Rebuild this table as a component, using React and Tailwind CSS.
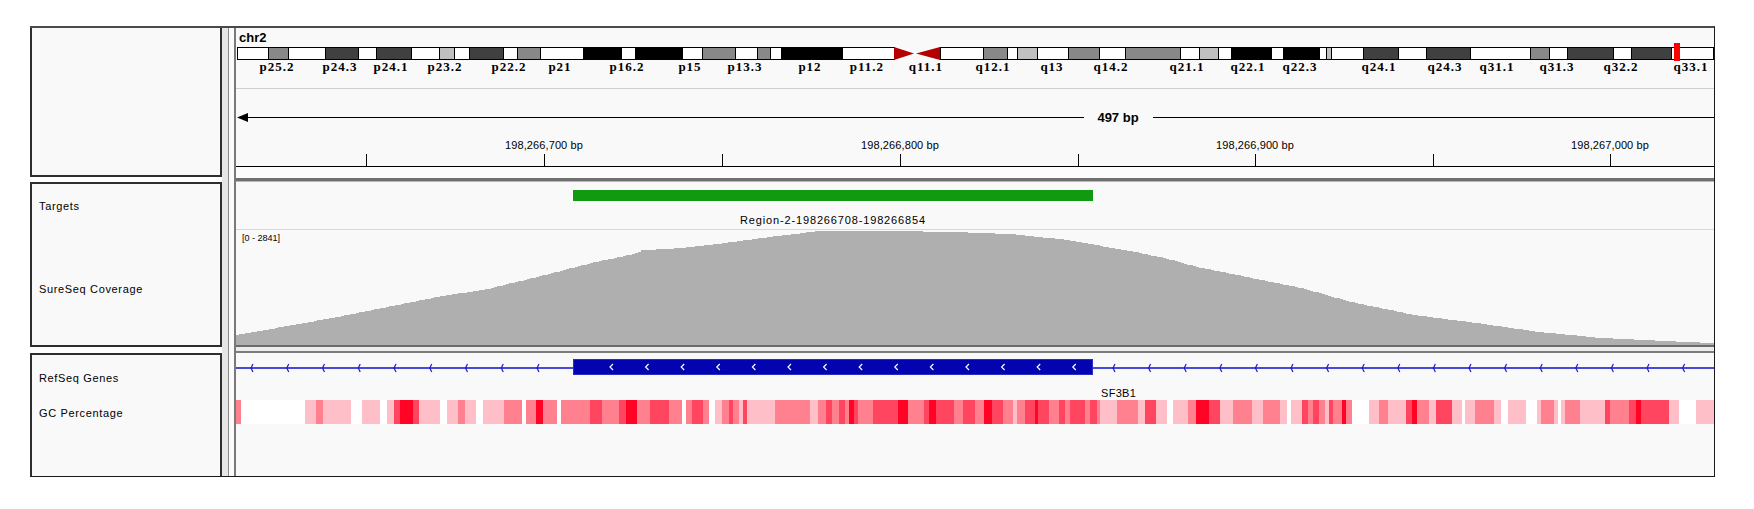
import React from "react";

// chromosome 2 ideogram bands: [start, end, stain]
const BANDS = [
  [237, 268, "w"], [268, 288, "g"], [288, 325, "w"], [325, 358, "d"], [358, 376, "w"],
  [376, 411, "d"], [411, 439, "w"], [439, 454, "l"], [454, 469, "w"], [469, 503, "d"],
  [503, 517, "w"], [517, 540, "g"], [540, 583, "w"], [583, 621, "k"], [621, 635, "w"],
  [635, 682, "k"], [682, 702, "w"], [702, 735, "g"], [735, 757, "w"], [757, 770, "g"],
  [770, 781, "w"], [781, 842, "k"], [842, 894, "w"],
  [940, 983, "w"], [983, 1007, "g"], [1007, 1017, "w"], [1017, 1037, "l"], [1037, 1068, "w"],
  [1068, 1099, "g"], [1099, 1125, "w"], [1125, 1180, "g"], [1180, 1199, "w"], [1199, 1218, "l"],
  [1218, 1231, "w"], [1231, 1271, "k"], [1271, 1283, "w"], [1283, 1319, "k"], [1319, 1326, "w"],
  [1326, 1331, "l"], [1331, 1363, "w"], [1363, 1398, "d"], [1398, 1426, "w"], [1426, 1470, "d"],
  [1470, 1530, "w"], [1530, 1549, "g"], [1549, 1567, "w"], [1567, 1613, "d"], [1613, 1631, "w"],
  [1631, 1671, "d"], [1671, 1713, "w"],
];

const STAIN = { w: "#ffffff", g: "#888888", d: "#404040", k: "#000000", l: "#c0c0c0" };

const BAND_LABELS = [
  ["p25.2", 277], ["p24.3", 340], ["p24.1", 391], ["p23.2", 445], ["p22.2", 509], ["p21", 560],
  ["p16.2", 627], ["p15", 690], ["p13.3", 745], ["p12", 810], ["p11.2", 867], ["q11.1", 926],
  ["q12.1", 993], ["q13", 1052], ["q14.2", 1111], ["q21.1", 1187], ["q22.1", 1248], ["q22.3", 1300],
  ["q24.1", 1379], ["q24.3", 1445], ["q31.1", 1497], ["q31.3", 1557], ["q32.2", 1621], ["q33.1", 1691],
];

const TICKS = [366, 544, 722, 900, 1078, 1255, 1433, 1610];
const TICK_LABELS = [
  ["198,266,700 bp", 544],
  ["198,266,800 bp", 900],
  ["198,266,900 bp", 1255],
  ["198,267,000 bp", 1610],
];

const COVERAGE = [
  [236, 335], [286, 326], [336, 317], [386, 307], [436, 297], [486, 289], [536, 277],
  [586, 264], [636, 253], [641, 250], [669, 249], [716, 244], [760, 238], [818, 231],
  [894, 231], [952, 232], [1009, 234], [1067, 240], [1100, 246], [1124, 250], [1163, 258],
  [1196, 267], [1300, 288], [1350, 302], [1413, 315], [1475, 323], [1538, 332], [1600, 338],
  [1684, 342], [1714, 343],
];

// GC percentage heat strip: [start, end, level]
const GC = [
  [236, 241, 2], [305, 316, 1], [316, 323, 2], [323, 351, 1], [362, 380, 1], [387, 394, 1],
  [394, 400, 3], [400, 413, 4], [413, 419, 3], [419, 440, 1], [447, 458, 1], [458, 465, 2],
  [465, 476, 1], [483, 504, 1], [504, 522, 2], [526, 536, 2], [536, 543, 4], [543, 557, 2],
  [561, 590, 2], [590, 602, 3], [602, 607, 2], [607, 619, 2], [619, 626, 3], [626, 637, 4],
  [637, 650, 2], [650, 669, 3], [669, 682, 2], [686, 692, 2], [692, 703, 3], [703, 709, 2],
  [715, 722, 1], [722, 729, 2], [729, 733, 3], [733, 739, 2], [739, 743, 1], [743, 747, 3],
  [747, 775, 1], [775, 810, 2], [810, 818, 1], [818, 826, 2], [826, 832, 3], [832, 839, 2],
  [839, 845, 3], [845, 849, 2], [849, 854, 4], [854, 858, 3], [858, 873, 2], [873, 898, 3],
  [898, 908, 4], [908, 924, 2], [924, 929, 3], [929, 936, 4], [936, 954, 3], [954, 963, 2],
  [963, 975, 3], [975, 984, 2], [984, 992, 4], [992, 1003, 3], [1003, 1013, 2], [1013, 1017, 1],
  [1017, 1025, 2], [1025, 1035, 3], [1035, 1038, 4], [1038, 1049, 3], [1049, 1059, 2],
  [1059, 1065, 3], [1065, 1070, 2], [1070, 1085, 3], [1085, 1090, 2], [1090, 1097, 3],
  [1097, 1100, 2], [1100, 1117, 1], [1117, 1138, 2], [1138, 1145, 1], [1145, 1156, 3],
  [1156, 1167, 1], [1173, 1188, 1], [1188, 1196, 2], [1196, 1209, 4], [1209, 1220, 3],
  [1220, 1233, 1], [1233, 1252, 2], [1252, 1263, 1], [1263, 1280, 2], [1280, 1287, 1],
  [1291, 1302, 1], [1302, 1308, 3], [1308, 1313, 2], [1313, 1319, 3], [1319, 1325, 2],
  [1325, 1329, 1], [1329, 1333, 3], [1333, 1342, 2], [1342, 1346, 4], [1346, 1352, 2],
  [1369, 1379, 1], [1379, 1388, 2], [1388, 1406, 1], [1406, 1412, 3], [1412, 1417, 4],
  [1417, 1429, 2], [1429, 1436, 1], [1436, 1452, 3], [1452, 1462, 1], [1465, 1475, 1],
  [1475, 1494, 2], [1494, 1501, 1], [1508, 1526, 1], [1537, 1541, 1], [1541, 1554, 2],
  [1554, 1558, 1], [1561, 1565, 1], [1565, 1580, 2], [1580, 1605, 1], [1605, 1610, 3],
  [1610, 1629, 2], [1629, 1636, 3], [1636, 1641, 4], [1641, 1669, 3], [1669, 1679, 1],
  [1696, 1714, 1],
];

const GC_COLORS = { 1: "#ffbfc8", 2: "#ff808f", 3: "#ff4560", 4: "#ff0424" };

const SANS = "Liberation Sans, Arial, sans-serif";
const SERIF = "Liberation Serif, Times New Roman, serif";

function coveragePath() {
  const yAt = (x) => {
    for (let i = 0; i < COVERAGE.length - 1; i++) {
      const [x0, y0] = COVERAGE[i];
      const [x1, y1] = COVERAGE[i + 1];
      if (x >= x0 && x <= x1) return Math.round(y0 + ((y1 - y0) * (x - x0)) / (x1 - x0));
    }
    return 343;
  };
  let d = `M236 346 V${yAt(236)}`;
  for (let x = 239; x <= 1714; x += 3) {
    d += ` H${x} V${yAt(x)}`;
  }
  d += " H1714 V346 Z";
  return d;
}

const Divider = () => (
  <div className="flex w-[14px] h-full shrink-0">
    <div className="w-[6px] bg-[#e6e6e6]" />
    <div className="w-px bg-[#8a8a8a]" />
    <div className="w-[5px] bg-[#fbfbfb]" />
    <div className="w-[2px] bg-[#7a7a7a]" />
  </div>
);

const TrackName = ({ children, className = "" }) => (
  <div className={`text-[11px] leading-[12px] tracking-[0.65px] text-black ${className}`}>{children}</div>
);

const Header = () => (
  <svg width="1478" height="150" viewBox="236 28 1478 150" shapeRendering="crispEdges" className="block shrink-0">
    <rect x="236" y="28" width="1478" height="139" fill="#f9f9f9" />
    <rect x="236" y="167" width="1478" height="11" fill="#fcfcfc" />
    <text x="239" y="42" fontFamily={SANS} fontSize="13" fontWeight="bold" fill="#000">chr2</text>

    {BANDS.map(([a, b, s]) => (
      <rect key={a} x={a + 0.5} y="47.5" width={b - a} height="12" fill={STAIN[s]} stroke="#000" strokeWidth="1" />
    ))}
    <polygon points="894,47 894,60 914,53.5" fill="#b40000" shapeRendering="auto" />
    <polygon points="940,47 940,60 916,53.5" fill="#b40000" shapeRendering="auto" />
    <rect x="1674" y="43" width="6" height="18" fill="#ff0000" />

    {BAND_LABELS.map(([t, x]) => (
      <text key={t} x={x} y="71" textAnchor="middle" fontFamily={SERIF} fontSize="13" fontWeight="bold" letterSpacing="1" fill="#000">
        {t}
      </text>
    ))}

    <rect x="236" y="88" width="1478" height="1" fill="#cfcfcf" />

    <rect x="240" y="117" width="844" height="1" fill="#000" />
    <rect x="1153" y="117" width="561" height="1" fill="#000" />
    <polygon points="237,117.5 248,113 248,122" fill="#000" shapeRendering="auto" />
    <text x="1118" y="122" textAnchor="middle" fontFamily={SANS} fontSize="13" fontWeight="bold" fill="#000">497 bp</text>

    {TICK_LABELS.map(([t, x]) => (
      <text key={t} x={x} y="149" textAnchor="middle" fontFamily={SANS} fontSize="11" letterSpacing="0.1" fill="#000">
        {t}
      </text>
    ))}
    {TICKS.map((x) => (
      <rect key={x} x={x} y="154" width="1" height="12" fill="#000" />
    ))}
    <rect x="236" y="166" width="1478" height="1" fill="#000" />
  </svg>
);

const CoverageTracks = () => (
  <svg width="1478" height="169" viewBox="236 178 1478 169" shapeRendering="crispEdges" className="block shrink-0">
    <rect x="236" y="178" width="1478" height="169" fill="#f9f9f9" />
    <rect x="236" y="178" width="1478" height="3" fill="#707070" />
    <rect x="236" y="181" width="1478" height="1" fill="#b8b8b8" />

    <rect x="573" y="190" width="520" height="11" fill="#109a10" />
    <text x="833" y="224" textAnchor="middle" fontFamily={SANS} fontSize="11" letterSpacing="0.85" fill="#000">
      Region-2-198266708-198266854
    </text>

    <rect x="236" y="229" width="1478" height="1" fill="#d8d8d8" />
    <path d={coveragePath()} fill="#afafaf" />
    <text x="242" y="241" fontFamily={SANS} fontSize="9" fill="#000">[0 - 2841]</text>

    <rect x="236" y="345" width="1478" height="2" fill="#6b6b6b" />
  </svg>
);

const before = Array.from({ length: 9 }, (_, i) => 251 + i * 35.75);
const inside = Array.from({ length: 14 }, (_, i) => 610 + i * 35.6);
const after = Array.from({ length: 17 }, (_, i) => 1113 + i * 35.6);

const AnnotationTracks = () => (
  <svg width="1478" height="129" viewBox="236 347 1478 129" shapeRendering="crispEdges" className="block shrink-0">
    <rect x="236" y="347" width="1478" height="129" fill="#f9f9f9" />
    <rect x="236" y="347" width="1478" height="4" fill="#ececec" />
    <rect x="236" y="351" width="1478" height="2" fill="#7c7c7c" />

    <rect x="236" y="367" width="1478" height="2" fill="#4a4ad8" />
    {[...before, ...after].map((x) => (
      <path key={x} d={`M${x + 2} 364 L${x} 368 L${x + 2} 372`} stroke="#1c1cd0" strokeWidth="1.2" fill="none" shapeRendering="auto" />
    ))}
    <rect x="573" y="359" width="520" height="16" fill="#0303b0" />
    <rect x="573.5" y="359.5" width="519" height="15" fill="none" stroke="#2a2ac4" strokeWidth="1" />
    {inside.map((x) => (
      <path key={x} d={`M${x + 3} 364 L${x} 367 L${x + 3} 370`} stroke="#ffffff" strokeWidth="1.2" fill="none" shapeRendering="auto" />
    ))}
    <text x="1101" y="397" fontFamily={SANS} fontSize="11" letterSpacing="0.3" fill="#000">SF3B1</text>

    <rect x="236" y="400" width="1478" height="24" fill="#ffffff" />
    {GC.map(([a, b, l]) => (
      <rect key={a} x={a} y="400" width={b - a} height="24" fill={GC_COLORS[l]} />
    ))}
  </svg>
);

export default function App() {
  return (
    <div className="w-[1754px] h-[509px] bg-white pt-[26px] pl-[30px] font-['Liberation_Sans',Arial,sans-serif]">
      <div className="w-[1685px] h-[451px] flex flex-col border-t-2 border-t-[#4a4a4a] border-r border-r-[#1a1a1a] border-b border-b-[#1a1a1a]">
        <div className="flex h-[150px]">
          <div className="w-[192px] h-[149px] shrink-0 border-x-2 border-b-2 border-[#2e2e2e] bg-[#f9f9f9]" />
          <Divider />
          <Header />
        </div>

        <div className="flex h-[169px]">
          <div className="w-[192px] shrink-0 pt-[4px] bg-white">
            <div className="h-[165px] border-2 border-[#2e2e2e] bg-[#f9f9f9] pl-[7px] pt-[16px]">
              <TrackName>Targets</TrackName>
              <TrackName className="mt-[71px]">SureSeq Coverage</TrackName>
            </div>
          </div>
          <Divider />
          <CoverageTracks />
        </div>

        <div className="flex h-[129px]">
          <div className="w-[192px] shrink-0 pt-[6px] bg-white">
            <div className="h-[123px] border-x-2 border-t-2 border-[#2e2e2e] bg-[#f9f9f9] pl-[7px] pt-[17px]">
              <TrackName>RefSeq Genes</TrackName>
              <TrackName className="mt-[23px]">GC Percentage</TrackName>
            </div>
          </div>
          <Divider />
          <AnnotationTracks />
        </div>
      </div>
    </div>
  );
}
